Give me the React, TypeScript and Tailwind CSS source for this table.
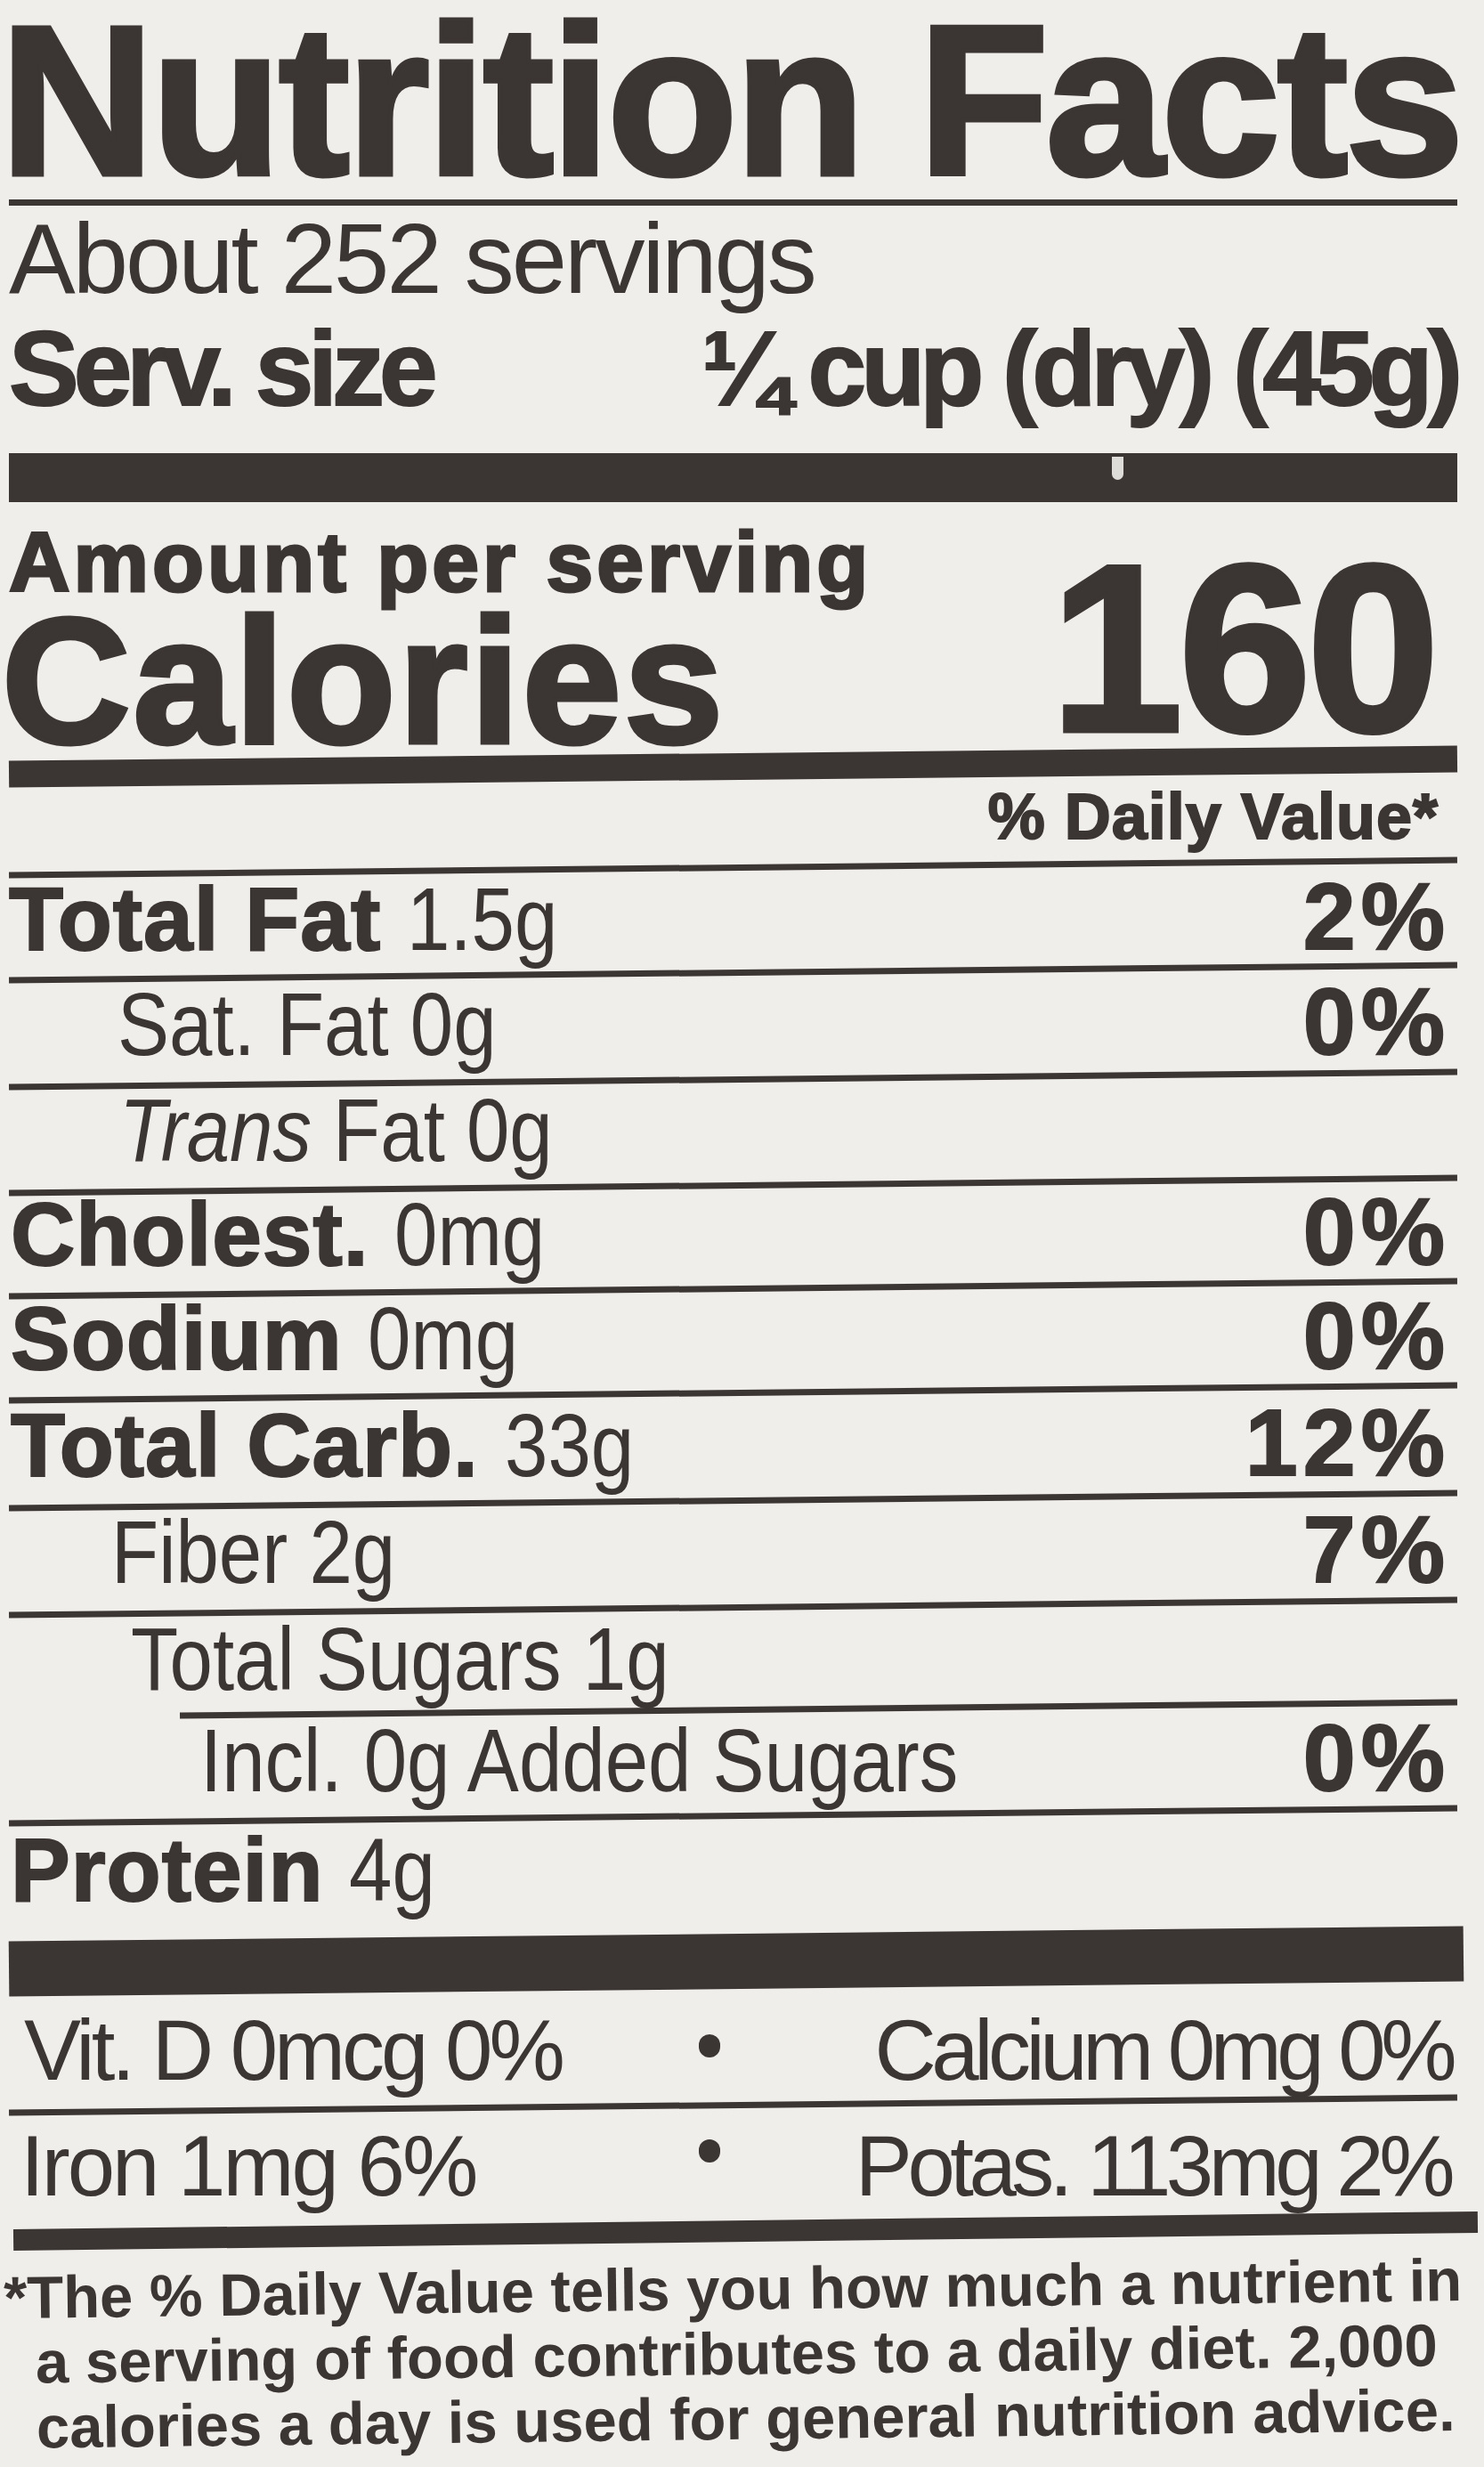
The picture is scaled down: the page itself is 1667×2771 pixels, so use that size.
import type { ReactNode } from 'react';

// ink + paper tones sampled by eye from the label photo
const STROKE_S = '[-webkit-text-stroke:2px_#3b3533]';

type NutrientRow = {
  key: string;
  label: ReactNode;
  dv?: string;
  cls: string;
  rule: 'full' | 'indent' | 'none';
};

const Bold = ({ children }: { children: ReactNode }) => (
  <span className={`font-bold tracking-[1px] ${STROKE_S}`}>{children}</span>
);
// the label's regular face is a condensed grotesk; squeeze the sans to match
const Reg = ({ children }: { children: ReactNode }) => (
  <span className="inline-block origin-left scale-x-[0.87]">{children}</span>
);

const rows: NutrientRow[] = [
  { key: 'fat', label: <><Bold>Total Fat </Bold><Reg>1.5g</Reg></>, dv: '2%', cls: 'h-[111px] pb-[7px]', rule: 'full' },
  { key: 'sat', label: <Reg>Sat. Fat 0g</Reg>, dv: '0%', cls: 'h-[113px] pb-[9px] pl-[122px]', rule: 'full' },
  {
    key: 'trans',
    label: (
      <Reg>
        <i>Trans</i> Fat 0g
      </Reg>
    ),
    cls: 'h-[112px] pb-[9px] pl-[124px]',
    rule: 'full',
  },
  { key: 'chol', label: <><Bold>Cholest. </Bold><Reg>0mg</Reg></>, dv: '0%', cls: 'h-[109px] pb-[8px] pl-[2px]', rule: 'full' },
  { key: 'sod', label: <><Bold>Sodium </Bold><Reg>0mg</Reg></>, dv: '0%', cls: 'h-[110px] pb-[8px] pl-[2px]', rule: 'full' },
  { key: 'carb', label: <><Bold>Total Carb. </Bold><Reg>33g</Reg></>, dv: '12%', cls: 'h-[114px] pb-[9px] pl-[2px]', rule: 'full' },
  { key: 'fiber', label: <Reg>Fiber 2g</Reg>, dv: '7%', cls: 'h-[113px] pb-[9px] pl-[115px]', rule: 'full' },
  { key: 'sugars', label: <Reg>Total Sugars 1g</Reg>, cls: 'h-[107px] pb-[3px] pl-[137px]', rule: 'indent' },
  { key: 'added', label: <Reg>Incl. 0g Added Sugars</Reg>, dv: '0%', cls: 'h-[113px] pb-[9px] pl-[215px]', rule: 'full' },
  { key: 'protein', label: <><Bold>Protein </Bold><Reg>4g</Reg></>, cls: 'h-[129px] pb-[22px] pl-[2px]', rule: 'none' },
];

function Rule({ indent = false }: { indent?: boolean }) {
  return <div className={`h-[7px] rotate-[-0.6deg] bg-[#3b3533] ${indent ? 'ml-[192px]' : ''}`} />;
}

function Bullet({ className }: { className: string }) {
  return <div className={`mx-auto h-[26px] w-[24px] rounded-full bg-[#3b3533] ${className}`} />;
}

export default function App() {
  return (
    <div className="h-[2771px] w-[1667px] overflow-hidden bg-[#efeeea] font-['Liberation_Sans',Arial,sans-serif] text-[#3b3533]">
      <div className="ml-[10px] w-[1627px]">
        {/* title */}
        <div className="h-[224px] pt-[3px]">
          <h1 className="ml-[-10px] whitespace-nowrap text-[240px] font-bold leading-[221px] tracking-[-3.5px] [-webkit-text-stroke:5px_#3b3533]">
            Nutrition Facts
          </h1>
        </div>
        <div className="h-[7px] bg-[#3b3533]" />

        {/* servings */}
        <div className="h-[274px]">
          <p className="mt-[4px] whitespace-nowrap text-[112px] leading-none tracking-[-3px]">About 252 servings</p>
          <div className="mt-[8px] flex justify-between whitespace-nowrap text-[118px] font-bold leading-none tracking-[-6px] [-webkit-text-stroke:2px_#3b3533]">
            <span>Serv. size</span>
            <span>¼ cup (dry) (45g)</span>
          </div>
        </div>
        <div className="relative h-[55px] bg-[#3b3533]">
          <span className="absolute left-[1239px] top-[4px] h-[26px] w-[13px] rounded-b-full bg-[#efeeea]/90" />
        </div>

        {/* calories */}
        <div className="flex h-[282px] items-start justify-between">
          <div className="flex flex-col whitespace-nowrap font-bold">
            <span className="mt-[20px] text-[95px] leading-none tracking-[4px] [-webkit-text-stroke:3px_#3b3533]">
              Amount per serving
            </span>
            <span className="ml-[-8px] mt-[-14px] text-[200px] leading-none tracking-[3px] [-webkit-text-stroke:5px_#3b3533]">
              Calories
            </span>
          </div>
          <span className="mt-[30px] pr-[25px] text-[268px] font-bold leading-none tracking-[-5px] [-webkit-text-stroke:5px_#3b3533]">
            160
          </span>
        </div>
        <div className="h-[30px] rotate-[-0.6deg] bg-[#3b3533]" />

        <div className="h-[95px] pr-[21px] pt-[5px] text-right">
          <span className={`text-[72px] font-bold leading-none tracking-[1px] ${STROKE_S}`}>% Daily Value*</span>
        </div>
        <Rule />

        {/* nutrient rows */}
        {rows.map((r) => (
          <div key={r.key}>
            <div className={`flex items-end justify-between ${r.cls}`}>
              <div className="whitespace-nowrap text-[100px] leading-none">{r.label}</div>
              {r.dv && (
                <div className={`pr-[8px] text-[106px] font-bold leading-none tracking-[6px] ${STROKE_S}`}>{r.dv}</div>
              )}
            </div>
            {r.rule !== 'none' && <Rule indent={r.rule === 'indent'} />}
          </div>
        ))}

        <div className="h-[62px] w-[1634px] rotate-[-0.6deg] bg-[#3b3533]" />

        {/* vitamins & minerals */}
        <div className="grid h-[127px] grid-cols-[775px_24px_1fr] items-end pb-[10px] text-[96px] leading-none">
          <span className="whitespace-nowrap pl-[17px] tracking-[-4px]">Vit. D 0mcg 0%</span>
          <Bullet className="mb-[40px]" />
          <span className="whitespace-nowrap pr-[6px] text-right tracking-[-5.5px]">Calcium 0mg 0%</span>
        </div>
        <Rule />
        <div className="grid h-[126px] grid-cols-[775px_24px_1fr] items-end pb-[13px] text-[96px] leading-none">
          <span className="whitespace-nowrap pl-[13px] tracking-[-3px]">Iron 1mg 6%</span>
          <Bullet className="mb-[52px]" />
          <span className="whitespace-nowrap pr-[8px] text-right tracking-[-5.5px]">Potas. 113mg 2%</span>
        </div>
        <div className="ml-[5px] h-[24px] w-[1645px] rotate-[-0.7deg] bg-[#3b3533]" />

        {/* footnote */}
        <div className="mt-[16px] rotate-[-0.7deg] whitespace-nowrap text-[67px] font-bold leading-[73px]">
          <p className="ml-[-5px]">*The % Daily Value tells you how much a nutrient in</p>
          <p className="pl-[30px]">a serving of food contributes to a daily diet. 2,000</p>
          <p className="pl-[30px]">calories a day is used for general nutrition advice.</p>
        </div>
      </div>
    </div>
  );
}
